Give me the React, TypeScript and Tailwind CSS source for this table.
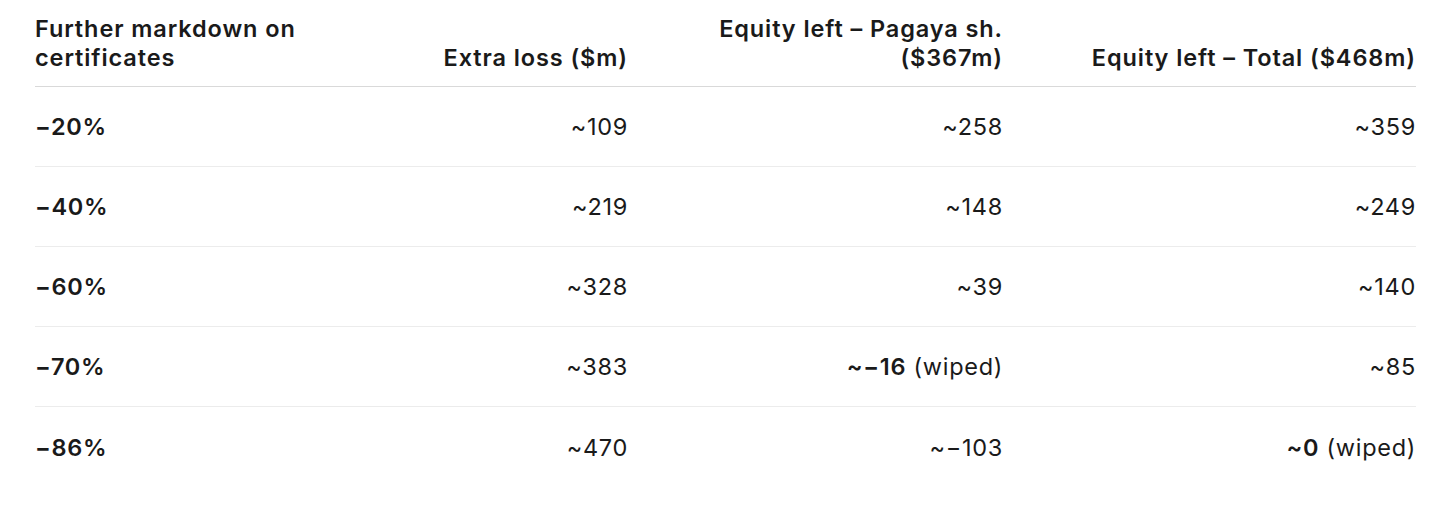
import React from "react";

type Row = {
  markdown: string;
  loss: string;
  pagaya: React.ReactNode;
  total: React.ReactNode;
};

const Wiped = ({ value }: { value: string }) => (
  <span>
    <span className="font-semibold">{value}</span> (wiped)
  </span>
);

const rows: Row[] = [
  { markdown: "−20%", loss: "~109", pagaya: "~258", total: "~359" },
  { markdown: "−40%", loss: "~219", pagaya: "~148", total: "~249" },
  { markdown: "−60%", loss: "~328", pagaya: "~39", total: "~140" },
  { markdown: "−70%", loss: "~383", pagaya: <Wiped value="~−16" />, total: "~85" },
  { markdown: "−86%", loss: "~470", pagaya: "~−103", total: <Wiped value="~0" /> },
];

const head = "flex items-end justify-end border-b border-[#d9d9d9] py-[14px] pl-6 text-right font-semibold tracking-[0.9px]";

const App = () => {
  return (
    <div
      className="min-h-[510px] w-full bg-white px-[35px] text-[#1a1a1a]"
      style={{ fontFamily: "Inter, 'Noto Sans', sans-serif" }}
    >
      <div className="grid grid-cols-[295px_298px_375px_413px] text-[23.5px] leading-[29px] tracking-[0.7px]">
        <div className="flex items-end border-b border-[#d9d9d9] py-[14px] pr-4 font-semibold tracking-[0.9px]">
          Further markdown on certificates
        </div>
        <div className={head}>Extra loss ($m)</div>
        <div className={head}>Equity left – Pagaya sh. ($367m)</div>
        <div className={head}>Equity left – Total ($468m)</div>

        {rows.map((r, i) => {
          const line = i < rows.length - 1 ? "border-b border-[#ececec]" : "";
          return (
            <React.Fragment key={r.markdown}>
              <div className={`flex h-20 items-center font-semibold ${line}`}>{r.markdown}</div>
              <div className={`flex h-20 items-center justify-end ${line}`}>{r.loss}</div>
              <div className={`flex h-20 items-center justify-end ${line}`}>{r.pagaya}</div>
              <div className={`flex h-20 items-center justify-end ${line}`}>{r.total}</div>
            </React.Fragment>
          );
        })}
      </div>
    </div>
  );
};

export default App;
